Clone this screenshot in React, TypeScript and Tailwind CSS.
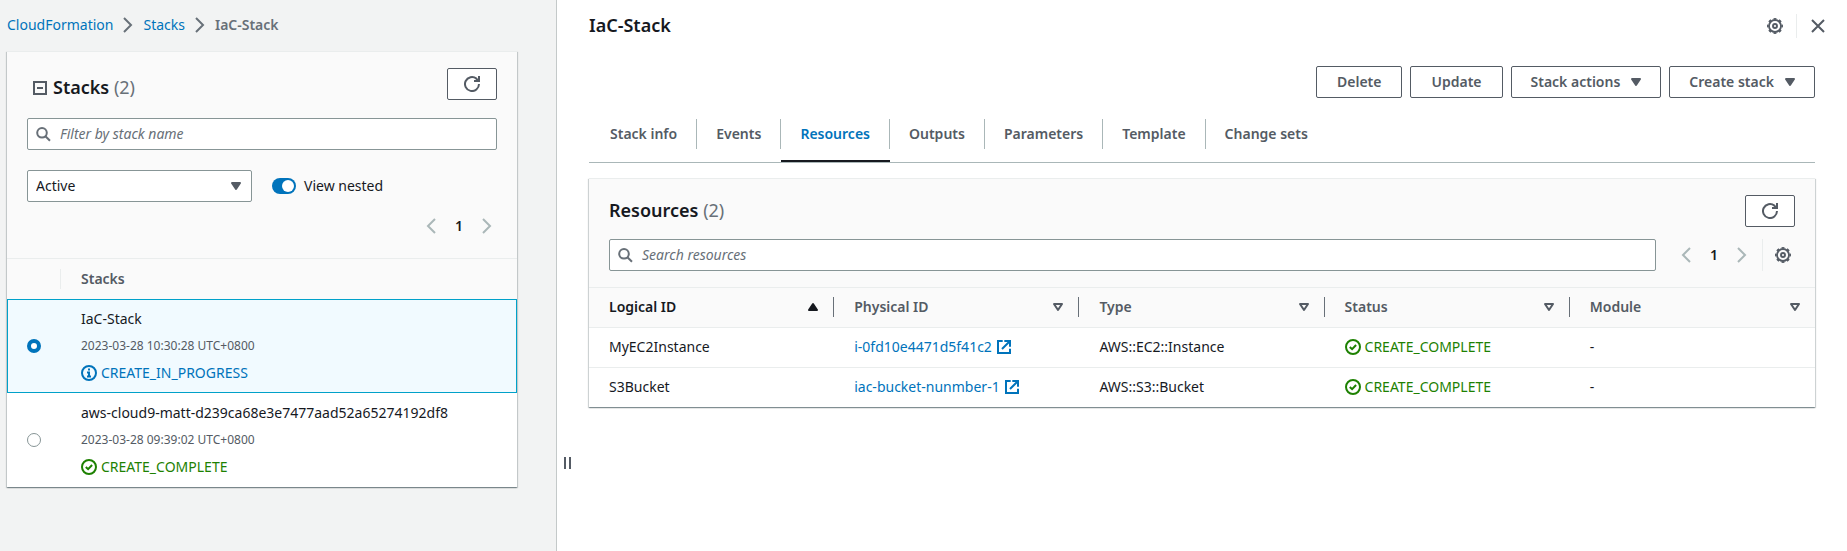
import { ReactNode } from "react";

type IconProps = { className?: string };

function RefreshIcon({ className = "" }: IconProps) {
  return (
    <svg viewBox="0 0 16 16" className={`size-4 shrink-0 ${className}`} fill="none" stroke="currentColor" strokeWidth="2" aria-hidden="true">
      <path d="M15 8a7 7 0 1 1-2.6-5.4L14.4 5" />
      <path d="M15 0v5h-5" />
    </svg>
  );
}

function SearchIcon({ className = "" }: IconProps) {
  return (
    <svg viewBox="0 0 16 16" className={`size-4 shrink-0 ${className}`} fill="none" stroke="currentColor" strokeWidth="2" aria-hidden="true">
      <circle cx="6" cy="6.8" r="4.8" />
      <path d="M9.400 10.200L14 14.800" />
    </svg>
  );
}

function GearIcon({ className = "" }: IconProps) {
  return (
    <svg viewBox="0 0 16 16" className={`size-4 shrink-0 ${className}`} fill="none" stroke="currentColor" aria-hidden="true">
      <circle cx="8" cy="8" r="6" strokeWidth="1.8" />
      <circle cx="8" cy="8" r="7.2" strokeWidth="1.6" pathLength="80" strokeDasharray="5.200 4.800" strokeDashoffset="2.600" />
      <circle cx="8" cy="8" r="2" strokeWidth="1.900" />
    </svg>
  );
}

function CloseIcon() {
  return (
    <svg viewBox="0 0 16 16" className="size-4 shrink-0" fill="none" stroke="currentColor" strokeWidth="2" aria-hidden="true">
      <path d="M2 2l12 12M14 2L2 14" />
    </svg>
  );
}

function Chevron({ left = false, className = "" }: IconProps & { left?: boolean }) {
  return (
    <svg viewBox="0 0 16 16" className={`size-4 shrink-0 ${className}`} fill="none" stroke="currentColor" strokeWidth="2" aria-hidden="true">
      <path d={left ? "M12 1L5 8l7 7" : "M4 1l7 7-7 7"} />
    </svg>
  );
}

function CaretDown({ className = "" }: IconProps) {
  return (
    <svg viewBox="0 0 16 16" className={`size-4 shrink-0 ${className}`} fill="currentColor" stroke="currentColor" strokeWidth="2" strokeLinejoin="round" aria-hidden="true">
      <path d="M4 5h8l-4 6z" />
    </svg>
  );
}

function SortIcon({ ascending = false }: { ascending?: boolean }) {
  return ascending ? (
    <svg viewBox="0 0 16 16" className="size-4 shrink-0" fill="currentColor" stroke="currentColor" strokeWidth="2" strokeLinejoin="round" aria-hidden="true">
      <path d="M4 11h8L8 5z" />
    </svg>
  ) : (
    <svg viewBox="0 0 16 16" className="size-4 shrink-0" fill="none" stroke="currentColor" strokeWidth="2" strokeLinejoin="round" aria-hidden="true">
      <path d="M4 5h8l-4 6z" />
    </svg>
  );
}

function CheckCircle() {
  return (
    <svg viewBox="0 0 16 16" className="size-4 shrink-0" fill="none" stroke="currentColor" strokeWidth="2" aria-hidden="true">
      <circle cx="8" cy="8" r="7" />
      <path d="M4.800 8l2.300 2.200 4-4.200" />
    </svg>
  );
}

function InfoCircle() {
  return (
    <svg viewBox="0 0 16 16" className="size-4 shrink-0" fill="none" stroke="currentColor" strokeWidth="2" aria-hidden="true">
      <circle cx="8" cy="8" r="7" />
      <path d="M7 4.500h2M6 7.500h2v4M6 11.500h4" />
    </svg>
  );
}

function ExternalIcon() {
  return (
    <svg viewBox="0 0 16 16" className="size-4 shrink-0" fill="none" stroke="currentColor" strokeWidth="2" aria-hidden="true">
      <path d="M6.700 2H2v12h12V9.700" />
      <path d="M8.300 2H14v5.700M13.500 2.500L6 10" />
    </svg>
  );
}

function Status({ children, pending = false }: { children: ReactNode; pending?: boolean }) {
  return (
    <span className={`flex items-center gap-1 ${pending ? "text-[#0073bb]" : "text-[#1d8102]"}`}>
      {pending ? <InfoCircle /> : <CheckCircle />}
      {children}
    </span>
  );
}

function Button({ children, menu = false }: { children: ReactNode; menu?: boolean }) {
  return (
    <button
      type="button"
      aria-haspopup={menu ? "menu" : undefined}
      className={`flex h-8 items-center gap-2 rounded-xs border border-[#545b64] bg-white font-semibold text-[#545b64] ${menu ? "pr-4 pl-[19px]" : "px-5"}`}
    >
      {children}
      {menu && <CaretDown />}
    </button>
  );
}

function RefreshButton({ label }: { label: string }) {
  return (
    <button
      type="button"
      aria-label={label}
      className="flex h-8 w-[50px] items-center justify-center rounded-xs border border-[#545b64] bg-white text-[#545b64]"
    >
      <RefreshIcon />
    </button>
  );
}

function SearchBox({ placeholder }: { placeholder: string }) {
  return (
    <label className="flex h-8 min-w-0 flex-1 items-center gap-2 rounded-xs border border-[#879596] bg-white px-2 text-[#687078]">
      <SearchIcon />
      <input
        type="text"
        aria-label={placeholder}
        placeholder={placeholder}
        className="min-w-0 flex-1 bg-transparent italic outline-none placeholder:text-[#687078]"
      />
    </label>
  );
}

function Pagination() {
  return (
    <nav aria-label="Pagination" className="flex items-center text-[#aab7b8]">
      <button type="button" aria-label="Previous page"><Chevron left /></button>
      <button type="button" className="w-10 text-center font-semibold text-[#16191f]">1</button>
      <button type="button" aria-label="Next page"><Chevron /></button>
    </nav>
  );
}

const stacks = [
  { name: "IaC-Stack", time: "2023-03-28 10:30:28 UTC+0800", status: "CREATE_IN_PROGRESS", selected: true },
  { name: "aws-cloud9-matt-d239ca68e3e7477aad52a65274192df8", time: "2023-03-28 09:39:02 UTC+0800", status: "CREATE_COMPLETE", selected: false },
];

const tabs = ["Stack info", "Events", "Resources", "Outputs", "Parameters", "Template", "Change sets"];

const columns = ["Logical ID", "Physical ID", "Type", "Status", "Module"];

const resources = [
  { id: "MyEC2Instance", physical: "i-0fd10e4471d5f41c2", type: "AWS::EC2::Instance" },
  { id: "S3Bucket", physical: "iac-bucket-nunmber-1", type: "AWS::S3::Bucket" },
];

const cardClass =
  "border-t border-[#eaeded] bg-white shadow-[0_1px_1px_0_rgba(0,28,36,0.3),1px_1px_1px_0_rgba(0,28,36,0.15),-1px_1px_1px_0_rgba(0,28,36,0.15)]";

function StackList() {
  return (
    <aside className="w-[557px] shrink-0 border-r border-[#c4c9c9] bg-[#f2f3f3] pr-[39px] pl-[7px]">
      <nav aria-label="Breadcrumb" className="flex h-[51px] items-center gap-[7px] pb-0.5 text-[#687078]">
        <a href="#cloudformation" className="text-[#0073bb]">CloudFormation</a>
        <Chevron />
        <a href="#stacks" className="text-[#0073bb]">Stacks</a>
        <Chevron />
        <span className="font-semibold">IaC-Stack</span>
      </nav>
      <section className={cardClass}>
        <div className="flex flex-col border-b border-[#eaeded] bg-[#fafafa] px-5 pt-4">
          <div className="flex justify-between">
            <h2 className="flex items-center gap-1 pt-1.5 pl-1 text-lg leading-6 font-semibold text-[#16191f]">
              <button type="button" aria-label="Collapse stacks" className="text-[#545b64]">
                <svg viewBox="0 0 18 18" className="size-[18px]" fill="none" stroke="currentColor" strokeWidth="2" aria-hidden="true">
                  <path d="M3 4h12v12H3zM6 10h6" />
                </svg>
              </button>
              <span>Stacks <span className="font-normal text-[#687078]">(2)</span></span>
            </h2>
            <RefreshButton label="Refresh stacks" />
          </div>
          <div className="flex pt-[18px]">
            <SearchBox placeholder="Filter by stack name" />
          </div>
          <div className="flex items-center gap-5 pt-5">
            <div className="relative w-[225px]">
              <select aria-label="Stack status" className="h-8 w-full appearance-none rounded-xs border border-[#879596] bg-white px-2 text-[#16191f]">
                <option>Active</option>
              </select>
              <CaretDown className="pointer-events-none absolute top-2 right-2 text-[#545b64]" />
            </div>
            <label className="flex items-center gap-2 text-[#16191f]">
              <input
                type="checkbox"
                role="switch"
                defaultChecked
                className="flex h-4 w-6 appearance-none items-center justify-end rounded-full bg-[#0073bb] pr-0.5 before:size-3 before:rounded-full before:bg-white"
              />
              View nested
            </label>
          </div>
          <div className="flex h-14 justify-end pr-0.5 pb-2">
            <Pagination />
          </div>
        </div>
        <table className="w-full table-fixed text-left">
          <thead>
            <tr className="h-10 bg-[#fafafa] text-[#545b64]">
              <th className="w-[54px] p-0"><div className="h-5 border-r border-[#eaeded]" /></th>
              <th className="pl-5 font-semibold">Stacks</th>
            </tr>
          </thead>
          <tbody>
            {stacks.map((stack) => (
              <tr
                key={stack.name}
                className={stack.selected ? "h-[94px] bg-[#f1faff] outline outline-[#00a1c9] -outline-offset-1" : "h-[94px]"}
              >
                <td className="pl-5">
                  <input
                    type="radio"
                    name="stack"
                    aria-label={stack.name}
                    defaultChecked={stack.selected}
                    className="block size-[14px] appearance-none rounded-full border border-[#879596] bg-white checked:border-4 checked:border-[#0073bb]"
                  />
                </td>
                <td className="pl-5">
                  <div className="flex flex-col gap-[7px] leading-5 text-[#16191f]">
                    <span>{stack.name}</span>
                    <span className="text-xs leading-5 text-[#545b64]">{stack.time}</span>
                    <Status pending={stack.selected}>{stack.status}</Status>
                  </div>
                </td>
              </tr>
            ))}
          </tbody>
        </table>
      </section>
    </aside>
  );
}

function StackDetails() {
  return (
    <main className="min-w-0 flex-1 pr-8">
      <header className="flex h-[51px] items-center justify-between">
        <h1 className="pb-0.5 text-lg leading-6 font-semibold text-[#16191f]">IaC-Stack</h1>
        <div className="-mr-[11px] flex items-center text-[#545b64]">
          <button type="button" aria-label="Preferences"><GearIcon /></button>
          <span className="mx-[13px] h-6 border-l border-[#eaeded]" />
          <button type="button" aria-label="Close"><CloseIcon /></button>
        </div>
      </header>
      <div className="flex justify-end gap-2 pt-[15px]">
        <Button>Delete</Button>
        <Button>Update</Button>
        <Button menu>Stack actions</Button>
        <Button menu>Create stack</Button>
      </div>
      <div role="tablist" className="mt-[21px] flex border-b border-[#aab7b8] pl-0.5">
        {tabs.map((tab, i) => (
          <button
            key={tab}
            type="button"
            role="tab"
            aria-selected={tab === "Resources"}
            className={`border-b-2 pb-[11px] font-semibold ${tab === "Resources" ? "border-[#16191f] text-[#0073bb]" : "border-transparent text-[#545b64]"}`}
          >
            <span className={`flex h-[30px] items-center px-[19px] ${i < tabs.length - 1 ? "border-r border-[#aab7b8]" : ""}`}>{tab}</span>
          </button>
        ))}
      </div>
      <section className={`mt-[15px] ${cardClass}`}>
        <div className="border-b border-[#eaeded] bg-[#fafafa] px-5 py-4">
          <div className="flex items-center justify-between">
            <h2 className="pb-0.5 text-lg leading-6 font-semibold text-[#16191f]">
              Resources <span className="font-normal text-[#687078]">(2)</span>
            </h2>
            <RefreshButton label="Refresh resources" />
          </div>
          <div className="flex items-center pt-3">
            <SearchBox placeholder="Search resources" />
            <div className="ml-[22px]"><Pagination /></div>
            <span className="mx-3 h-8 border-l border-[#eaeded]" />
            <button type="button" aria-label="Table preferences" className="mr-1 text-[#545b64]"><GearIcon /></button>
          </div>
        </div>
        <table className="w-full table-fixed text-left">
          <thead>
            <tr className="h-[39px] border-b border-[#eaeded] bg-[#fafafa]">
              {columns.map((column, i) => (
                <th key={column} className={i === 0 ? "p-0 font-semibold text-[#16191f]" : "p-0 font-semibold text-[#545b64]"}>
                  <div className={`flex h-5 items-center justify-between pr-3 pl-5 ${i < columns.length - 1 ? "border-r border-[#687078]" : ""}`}>
                    {column}
                    <SortIcon ascending={i === 0} />
                  </div>
                </th>
              ))}
            </tr>
          </thead>
          <tbody className="text-[#16191f]">
            {resources.map((row) => (
              <tr key={row.id} className="h-10 border-b border-[#eaeded] last:border-b-0">
                <td className="pl-5">{row.id}</td>
                <td className="pl-5">
                  <a href={`#${row.id}`} className="flex items-center gap-1 text-[#0073bb]">
                    {row.physical}
                    <ExternalIcon />
                  </a>
                </td>
                <td className="pl-5">{row.type}</td>
                <td className="pl-5"><Status>CREATE_COMPLETE</Status></td>
                <td className="pl-5">-</td>
              </tr>
            ))}
          </tbody>
        </table>
      </section>
    </main>
  );
}

export default function App() {
  return (
    <div className="flex min-h-screen bg-white font-['Noto_Sans',sans-serif] text-sm">
      <StackList />
      <div role="separator" aria-orientation="vertical" className="flex w-8 shrink-0 items-end pb-[82px] pl-[7px]">
        <span className="h-3 w-[7px] border-x-2 border-[#545b64]" />
      </div>
      <StackDetails />
    </div>
  );
}
